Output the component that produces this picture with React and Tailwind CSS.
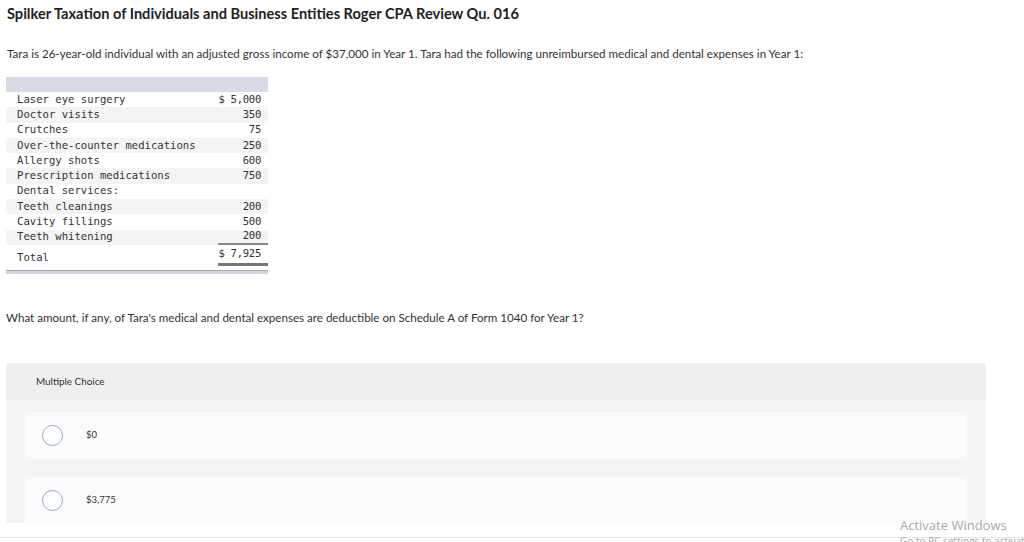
import React from "react";

const rows = [
  ["Laser eye surgery", "$ 5,000"],
  ["Doctor visits", "350"],
  ["Crutches", "75"],
  ["Over-the-counter medications", "250"],
  ["Allergy shots", "600"],
  ["Prescription medications", "750"],
  ["Dental services:", ""],
  ["Teeth cleanings", "200"],
  ["Cavity fillings", "500"],
  ["Teeth whitening", "200"],
];

function Radio() {
  return <div className="w-[21px] h-[21px] rounded-full border-[1.5px] border-[#8fa8cc] bg-white shrink-0" />;
}

export default function App() {
  return (
    <div className="w-[1024px] h-[542px] bg-white overflow-hidden relative" style={{ fontFamily: "Lato, 'Open Sans', sans-serif" }}>
      <div className="pl-[7px] pt-[5px]">
        <h1 className="text-[14.6px] font-bold text-[#222] leading-[18px]">
          Spilker Taxation of Individuals and Business Entities Roger CPA Review Qu. 016
        </h1>
        <p className="mt-[24px] text-[11.6px] text-[#333] leading-[14px]">
          Tara is 26-year-old individual with an adjusted gross income of $37,000 in Year 1. Tara had the following unreimbursed medical and dental expenses in Year 1:
        </p>
      </div>

      <div className="ml-[6px] mt-[16px] w-[262px] text-[10.6px] text-[#333]" style={{ fontFamily: "'DejaVu Sans Mono', 'Liberation Mono', monospace" }}>
        <div className="h-[15px] bg-[#d7dbe7]" />
        {rows.map(([label, val], i) => (
          <div key={label} className={`flex h-[15.3px] items-center ${i % 2 === 1 ? "bg-[#f4f4f4]" : "bg-white"}`}>
            <span className="pl-[11px] flex-1 whitespace-pre">{label}</span>
            <span className={`w-[50px] text-right pr-[7px] tracking-[-0.3px] ${i === 9 ? "border-b-2 border-[#888] h-full flex items-center justify-end" : ""}`}>{val}</span>
          </div>
        ))}
        <div className="flex h-[21px] items-center bg-white">
          <span className="pl-[11px] flex-1 pt-[4px]">Total</span>
          <span className="w-[50px] text-right pr-[7px] border-b-[3px] border-[#777] h-full flex items-center justify-end tracking-[-0.3px]">$ 7,925</span>
        </div>
        <div className="h-[4px] mt-[4px] bg-[#d2d6e2] border-t border-[#a4a8b2]" />
      </div>

      <p className="ml-[6px] mt-[37px] text-[11.6px] text-[#333] leading-[14px]">
        What amount, if any, of Tara's medical and dental expenses are deductible on Schedule A of Form 1040 for Year 1?
      </p>

      <div className="ml-[6px] mt-[38px] w-[980px] h-[160px] overflow-hidden bg-[#f5f5f5] rounded-t-[3px]">
        <div className="h-[37px] bg-[#efefef] flex items-center pl-[30px] text-[9.9px] text-[#333] rounded-t-[3px]">
          Multiple Choice
        </div>
        <div className="px-[19px] pt-[12px] flex flex-col gap-[18px]">
          <div className="h-[47px] bg-[#fbfbfb] flex items-center pl-[17px] gap-[23px] text-[9.5px] text-[#333]">
            <Radio />
            <span>$0</span>
          </div>
          <div className="h-[47px] bg-[#fbfbfb] flex items-center pl-[17px] gap-[23px] text-[9.5px] text-[#333]">
            <Radio />
            <span>$3,775</span>
          </div>
        </div>
      </div>

      <div className="absolute left-0 right-0 top-[537px] h-px bg-[#e6e6e6]" />
      <div className="absolute left-[900px] top-[517px] text-[#a8a8a8] text-[13px] leading-[17px]" style={{ fontFamily: "'Open Sans', sans-serif" }}>
        Activate Windows
        <div className="text-[10px] leading-[14px] whitespace-nowrap">Go to PC settings to activate Windows.</div>
      </div>
    </div>
  );
}
